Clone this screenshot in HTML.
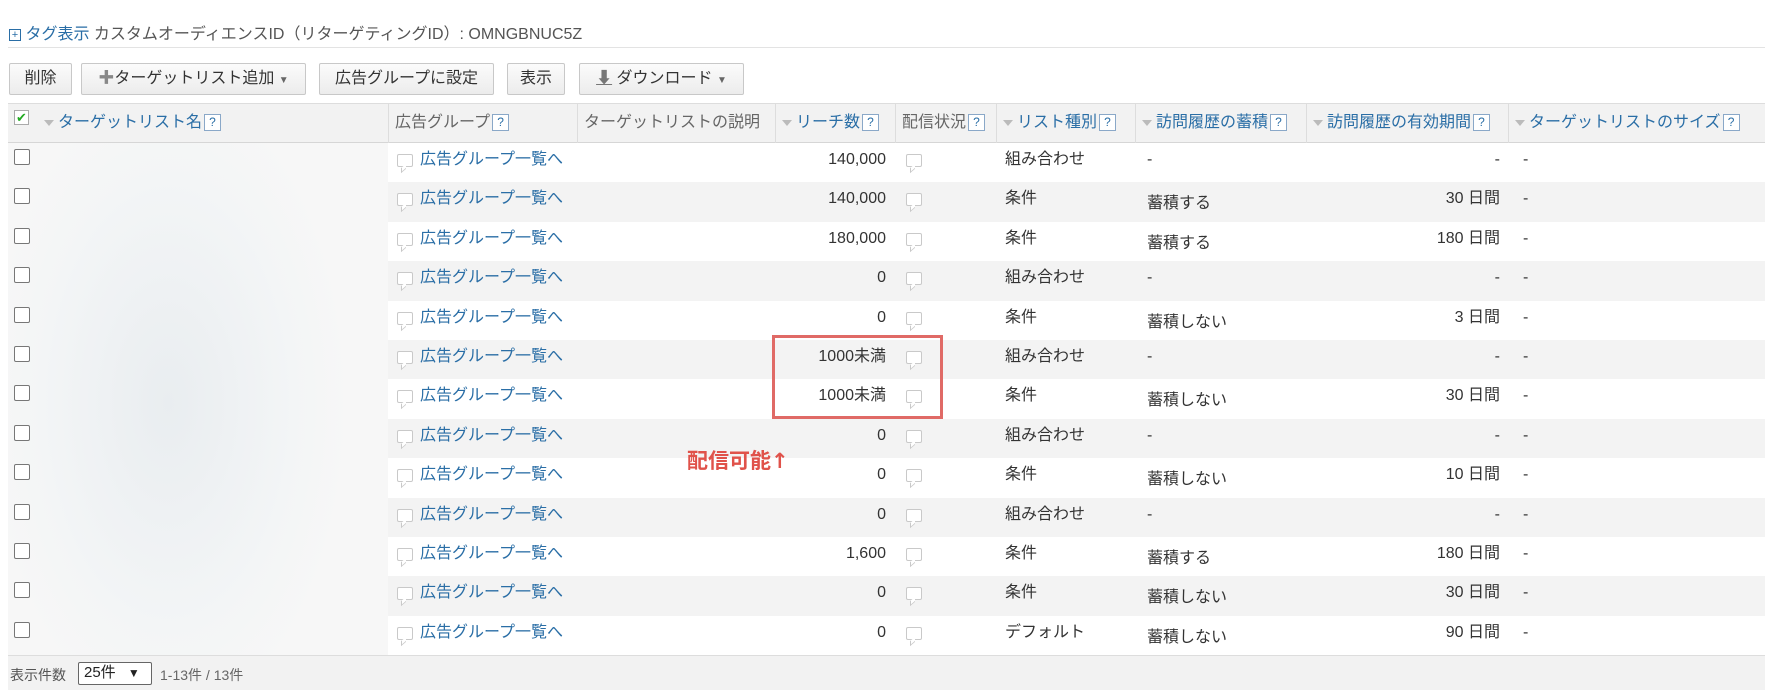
<!DOCTYPE html>
<html><head><meta charset="utf-8"><style>
*{box-sizing:border-box;margin:0;padding:0}
body{width:1765px;height:690px;background:#fff;font-family:"Liberation Sans","Noto Sans CJK JP",sans-serif;font-size:16px;line-height:20px;color:#333;position:relative;overflow:hidden}
.a{position:absolute;white-space:nowrap;line-height:20px;height:20px}
.btn{position:absolute;top:63px;height:32px;border:1px solid #c8c8c8;background:linear-gradient(#fbfbfb,#ececec);border-radius:2px;font-size:16px;line-height:30px;text-align:center;color:#333}
.hd{position:absolute;top:103px;height:40px;border-top:1px solid #ddd;border-bottom:1px solid #d6d6d6;background:#f2f2f2}
.hc{position:absolute;top:103px;height:40px;border-left:1px solid #ddd;line-height:40px;font-size:16px;color:#666;padding-left:6px;white-space:nowrap}
.hc.b{color:#2a6ea6}
.q{display:inline-block;width:17px;height:17px;border:1px solid #8aa8c8;background:#fff;color:#2a6ea6;font-size:12px;line-height:15px;text-align:center;vertical-align:middle;margin-left:2px}
.tri{display:inline-block;width:0;height:0;border-left:5px solid transparent;border-right:5px solid transparent;border-top:6px solid #bbb;margin-right:4px;vertical-align:middle}
.row{position:absolute;left:8px;width:1757px;height:39.4px}
.g{background:#f3f3f3}
.cb{position:absolute;left:14px;width:16px;height:16px;border:1.5px solid #777;border-radius:2px;background:#fff}
.lk{position:absolute;left:420px;color:#2a6ea6;font-size:16px}
.ic{position:absolute;width:16px;height:13px;border:1.5px solid #c9c9c9;border-radius:2px;background:#fff}
.ic:after{content:"";position:absolute;left:3px;bottom:-5px;width:4px;height:4px;border-left:1.5px solid #c9c9c9;border-bottom:1.5px solid #c9c9c9;background:#fff;transform:skewY(-40deg)}
.num{position:absolute;right:879px;text-align:right}
.per{position:absolute;right:265px;text-align:right}
</style></head><body>
<div class="a" style="left:9px;top:25px;font-size:16px"><span style="display:inline-block;width:12px;height:12px;border:1px solid #2a6ea6;color:#2a6ea6;font-size:11px;line-height:10px;text-align:center;vertical-align:1px">+</span> <span style="color:#2a6ea6">タグ表示</span> <span style="color:#555">カスタムオーディエンスID（リターゲティングID）: OMNGBNUC5Z</span></div>
<div class="a" style="left:8px;top:47px;width:1757px;height:1px;background:#e3e3e3"></div>
<div class="btn" style="left:9px;width:63px">削除</div>
<div class="btn" style="left:81px;width:225px"><span style="color:#888">✚</span>ターゲットリスト追加 <span style="font-size:10px;color:#666">▼</span></div>
<div class="btn" style="left:319px;width:175px">広告グループに設定</div>
<div class="btn" style="left:507px;width:58px">表示</div>
<div class="btn" style="left:579px;width:165px"><span style="color:#777;text-decoration:underline">⬇</span> ダウンロード <span style="font-size:10px;color:#666">▼</span></div>

<div class="hd" style="left:8px;width:1757px"></div>
<div class="a" style="left:14px;top:110px;width:15px;height:15px;border:1px solid #aaa;background:#fff;color:#2a2;font-size:13px;line-height:13px;text-align:center">✔</div>
<div class="hc b" style="left:38px;width:350px;border-left:none"><span class="tri"></span>ターゲットリスト名<span class="q">?</span></div>
<div class="hc" style="left:388px;width:188px">広告グループ<span class="q">?</span></div>
<div class="hc" style="left:577px;width:198px">ターゲットリストの説明</div>
<div class="hc b" style="left:775px;width:120px"><span class="tri"></span>リーチ数<span class="q">?</span></div>
<div class="hc" style="left:895px;width:101px">配信状況<span class="q">?</span></div>
<div class="hc b" style="left:996px;width:139px"><span class="tri"></span>リスト種別<span class="q">?</span></div>
<div class="hc b" style="left:1135px;width:171px"><span class="tri"></span>訪問履歴の蓄積<span class="q">?</span></div>
<div class="hc b" style="left:1306px;width:202px"><span class="tri"></span>訪問履歴の有効期間<span class="q">?</span></div>
<div class="hc b" style="left:1508px;width:257px"><span class="tri"></span>ターゲットリストのサイズ<span class="q">?</span></div>

<div class="row" style="top:143px"></div>
<div class="row g" style="top:182.4px"></div>
<div class="row" style="top:221.8px"></div>
<div class="row g" style="top:261.2px"></div>
<div class="row" style="top:300.6px"></div>
<div class="row g" style="top:340px"></div>
<div class="row" style="top:379.4px"></div>
<div class="row g" style="top:418.8px"></div>
<div class="row" style="top:458.2px"></div>
<div class="row g" style="top:497.6px"></div>
<div class="row" style="top:537px"></div>
<div class="row g" style="top:576.4px"></div>
<div class="row" style="top:615.8px"></div>
<div class="a" style="left:8px;top:143px;width:380px;height:512px;background:radial-gradient(ellipse 180px 320px at 160px 260px,#e9edf0,#f3f5f6 70%,#f7f7f7)"></div>

<div class="cb" style="top:149px"></div><div class="cb" style="top:188px"></div><div class="cb" style="top:228px"></div><div class="cb" style="top:267px"></div><div class="cb" style="top:307px"></div><div class="cb" style="top:346px"></div><div class="cb" style="top:385px"></div><div class="cb" style="top:425px"></div><div class="cb" style="top:464px"></div><div class="cb" style="top:504px"></div><div class="cb" style="top:543px"></div><div class="cb" style="top:582px"></div><div class="cb" style="top:622px"></div>

<div class="ic" style="left:397px;top:154px"></div><div class="ic" style="left:397px;top:193px"></div><div class="ic" style="left:397px;top:233px"></div><div class="ic" style="left:397px;top:272px"></div><div class="ic" style="left:397px;top:312px"></div><div class="ic" style="left:397px;top:351px"></div><div class="ic" style="left:397px;top:390px"></div><div class="ic" style="left:397px;top:430px"></div><div class="ic" style="left:397px;top:469px"></div><div class="ic" style="left:397px;top:509px"></div><div class="ic" style="left:397px;top:548px"></div><div class="ic" style="left:397px;top:587px"></div><div class="ic" style="left:397px;top:627px"></div>
<div class="ic" style="left:906px;top:154px"></div><div class="ic" style="left:906px;top:193px"></div><div class="ic" style="left:906px;top:233px"></div><div class="ic" style="left:906px;top:272px"></div><div class="ic" style="left:906px;top:312px"></div><div class="ic" style="left:906px;top:351px"></div><div class="ic" style="left:906px;top:390px"></div><div class="ic" style="left:906px;top:430px"></div><div class="ic" style="left:906px;top:469px"></div><div class="ic" style="left:906px;top:509px"></div><div class="ic" style="left:906px;top:548px"></div><div class="ic" style="left:906px;top:587px"></div><div class="ic" style="left:906px;top:627px"></div>

<div class="a lk" style="top:150px">広告グループ一覧へ</div><div class="a lk" style="top:189px">広告グループ一覧へ</div><div class="a lk" style="top:229px">広告グループ一覧へ</div><div class="a lk" style="top:268px">広告グループ一覧へ</div><div class="a lk" style="top:308px">広告グループ一覧へ</div><div class="a lk" style="top:347px">広告グループ一覧へ</div><div class="a lk" style="top:386px">広告グループ一覧へ</div><div class="a lk" style="top:426px">広告グループ一覧へ</div><div class="a lk" style="top:465px">広告グループ一覧へ</div><div class="a lk" style="top:505px">広告グループ一覧へ</div><div class="a lk" style="top:544px">広告グループ一覧へ</div><div class="a lk" style="top:583px">広告グループ一覧へ</div><div class="a lk" style="top:623px">広告グループ一覧へ</div>

<div class="a num" style="top:150px">140,000</div><div class="a num" style="top:189px">140,000</div><div class="a num" style="top:229px">180,000</div><div class="a num" style="top:268px">0</div><div class="a num" style="top:308px">0</div><div class="a num" style="top:347px">1000未満</div><div class="a num" style="top:386px">1000未満</div><div class="a num" style="top:426px">0</div><div class="a num" style="top:465px">0</div><div class="a num" style="top:505px">0</div><div class="a num" style="top:544px">1,600</div><div class="a num" style="top:583px">0</div><div class="a num" style="top:623px">0</div>

<div class="a" style="left:1005px;top:150px">組み合わせ</div><div class="a" style="left:1005px;top:189px">条件</div><div class="a" style="left:1005px;top:229px">条件</div><div class="a" style="left:1005px;top:268px">組み合わせ</div><div class="a" style="left:1005px;top:308px">条件</div><div class="a" style="left:1005px;top:347px">組み合わせ</div><div class="a" style="left:1005px;top:386px">条件</div><div class="a" style="left:1005px;top:426px">組み合わせ</div><div class="a" style="left:1005px;top:465px">条件</div><div class="a" style="left:1005px;top:505px">組み合わせ</div><div class="a" style="left:1005px;top:544px">条件</div><div class="a" style="left:1005px;top:583px">条件</div><div class="a" style="left:1005px;top:623px">デフォルト</div>

<div class="a" style="left:1147px;top:150px">-</div><div class="a" style="left:1147px;top:194px">蓄積する</div><div class="a" style="left:1147px;top:234px">蓄積する</div><div class="a" style="left:1147px;top:268px">-</div><div class="a" style="left:1147px;top:313px">蓄積しない</div><div class="a" style="left:1147px;top:347px">-</div><div class="a" style="left:1147px;top:391px">蓄積しない</div><div class="a" style="left:1147px;top:426px">-</div><div class="a" style="left:1147px;top:470px">蓄積しない</div><div class="a" style="left:1147px;top:505px">-</div><div class="a" style="left:1147px;top:549px">蓄積する</div><div class="a" style="left:1147px;top:588px">蓄積しない</div><div class="a" style="left:1147px;top:628px">蓄積しない</div>

<div class="a per" style="top:150px">-</div><div class="a per" style="top:189px">30 日間</div><div class="a per" style="top:229px">180 日間</div><div class="a per" style="top:268px">-</div><div class="a per" style="top:308px">3 日間</div><div class="a per" style="top:347px">-</div><div class="a per" style="top:386px">30 日間</div><div class="a per" style="top:426px">-</div><div class="a per" style="top:465px">10 日間</div><div class="a per" style="top:505px">-</div><div class="a per" style="top:544px">180 日間</div><div class="a per" style="top:583px">30 日間</div><div class="a per" style="top:623px">90 日間</div>

<div class="a" style="left:1523px;top:150px">-</div><div class="a" style="left:1523px;top:189px">-</div><div class="a" style="left:1523px;top:229px">-</div><div class="a" style="left:1523px;top:268px">-</div><div class="a" style="left:1523px;top:308px">-</div><div class="a" style="left:1523px;top:347px">-</div><div class="a" style="left:1523px;top:386px">-</div><div class="a" style="left:1523px;top:426px">-</div><div class="a" style="left:1523px;top:465px">-</div><div class="a" style="left:1523px;top:505px">-</div><div class="a" style="left:1523px;top:544px">-</div><div class="a" style="left:1523px;top:583px">-</div><div class="a" style="left:1523px;top:623px">-</div>

<div class="a" style="left:772px;top:335px;width:171px;height:84px;border:3px solid #e06a66"></div>
<div class="a" style="left:687px;top:449px;color:#e0524a;font-size:21px;line-height:24px;height:24px;font-weight:bold">配信可能<span style="font-family:'DejaVu Sans',sans-serif">↑</span></div>

<div class="a" style="left:8px;top:655px;width:1757px;height:35px;background:#f2f2f2;border-top:1px solid #ddd"></div>
<div class="a" style="left:10px;top:665px;font-size:14px;color:#555">表示件数</div>
<div class="a" style="left:78px;top:662px;width:74px;height:23px;border:1.5px solid #666;border-radius:2px;background:#fff;font-size:15px;line-height:20px;padding-left:5px;color:#222">25件 <span style="font-size:12px;margin-left:8px">▼</span></div>
<div class="a" style="left:160px;top:665px;font-size:14px;color:#666">1-13件 / 13件</div>
</body></html>
